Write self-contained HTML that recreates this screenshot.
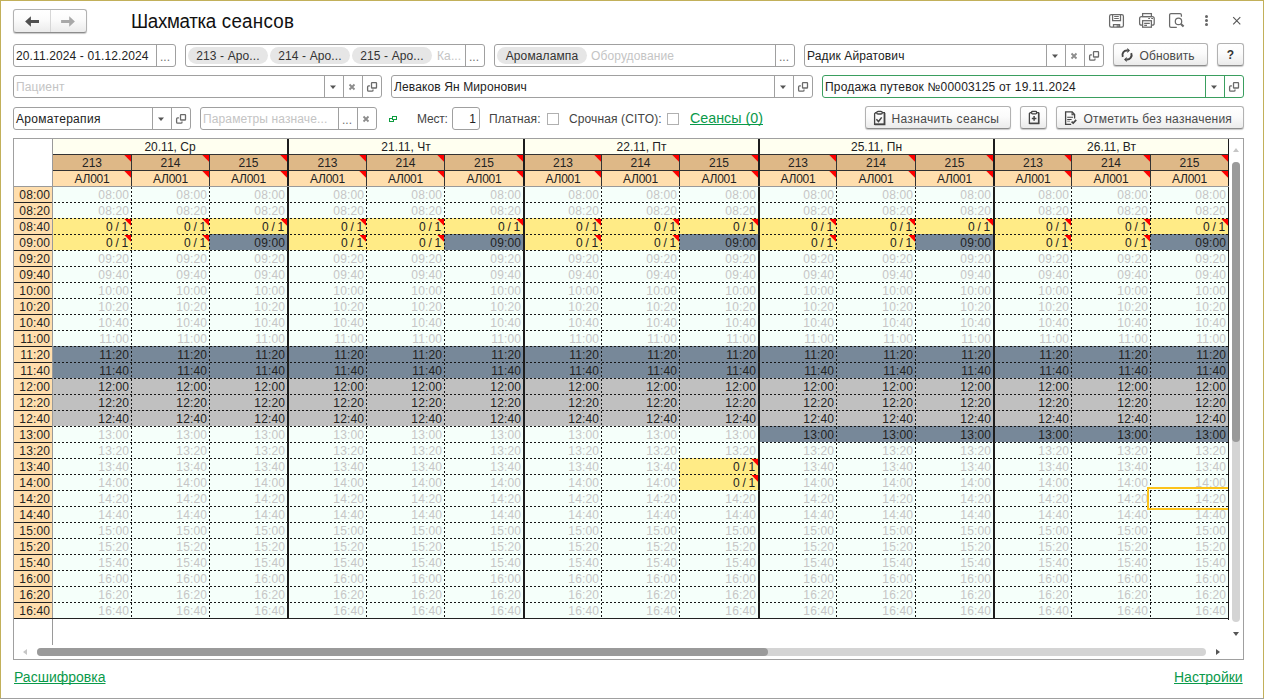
<!DOCTYPE html><html><head><meta charset="utf-8"><title>Шахматка сеансов</title><style>
*{box-sizing:border-box;margin:0;padding:0}
html,body{width:1264px;height:699px;overflow:hidden;background:#fff}
body{position:relative;font-family:"Liberation Sans",sans-serif;font-size:12px;color:#222;letter-spacing:0.12px}
.abs{position:absolute}
.wb{position:absolute;background:#c2b05a}
.field{position:absolute;height:23px;border:1px solid #a0a0a0;border-radius:3px;background:#fff;overflow:hidden}
.field .tx{position:absolute;left:2px;top:1px;line-height:21px;white-space:nowrap;color:#222}
.field .ph{position:absolute;top:1px;line-height:21px;white-space:nowrap;color:#c4c4c4}
.seg{position:absolute;top:0;bottom:0;width:19px;border-left:1px solid #a0a0a0}
.tag{position:absolute;top:2px;height:17px;border-radius:9px;background:#e6e6e6;line-height:19px;text-align:center;white-space:nowrap;color:#333}
.btn{position:absolute;height:23px;border:1px solid #b2b2b2;border-bottom-color:#8c8c8c;border-radius:3px;background:linear-gradient(#ffffff,#fbfbfb 45%,#ebebeb);box-shadow:0 1px 1px rgba(0,0,0,.22);white-space:nowrap;color:#4a4a4a;letter-spacing:0}
.lbl{position:absolute;white-space:nowrap;line-height:23px;color:#444}
.cb{position:absolute;width:12px;height:12px;border:1px solid #b0b0b0;background:#fff}
.lnk{position:absolute;color:#0a9a4a;text-decoration:underline;text-decoration-skip-ink:none;white-space:nowrap;letter-spacing:0}
.c{position:absolute;height:15px;line-height:17px;text-align:right;padding-right:2px;color:#c6c6c6;white-space:nowrap;overflow:hidden}
.h{position:absolute;height:15px;line-height:17px;text-align:center;color:#222;white-space:nowrap;overflow:hidden;letter-spacing:0}
.tri{position:absolute;width:7px;height:7px;background:#f00;margin-left:-1px;clip-path:polygon(0.3px 0,7px 0,7px 6.7px)}
.hd{position:absolute;height:1px;background-image:linear-gradient(to right,#161616 50%,transparent 50%);background-size:4px 1px}
.vd{position:absolute;width:1px;background-image:linear-gradient(to bottom,#161616 50%,transparent 50%);background-size:1px 4px}
</style></head><body>
<div class="wb" style="left:0;top:0;width:1264px;height:1px"></div>
<div class="wb" style="left:0;top:0;width:1px;height:699px"></div>
<div class="wb" style="left:1263px;top:0;width:1px;height:699px"></div>
<div class="abs" style="left:0;top:698px;width:1264px;height:1px;background:#a0a0a0"></div>
<div class="btn" style="left:13px;top:9px;width:74px;height:24px"></div>
<div class="abs" style="left:50px;top:10px;width:1px;height:22px;background:#d6d6d6"></div>
<svg class="abs" style="left:24px;top:14px" width="16" height="14" viewBox="0 0 16 14"><path d="M1.1 7.5 L6.9 2.2 V6 H15 V9 H6.9 V12.8 Z" fill="#505050"/></svg>
<svg class="abs" style="left:60px;top:14px" width="16" height="14" viewBox="0 0 16 14"><path d="M14.9 7.5 L9.2 2.2 V6 H1.1 V9 H9.2 V12.8 Z" fill="#a8a8a8"/></svg>
<div class="abs" style="left:131px;top:9px;font-size:19.5px;line-height:24px;color:#111;white-space:nowrap;letter-spacing:0;transform:scaleX(0.963);transform-origin:0 0"><span style="letter-spacing:-0.37px">Шахматка</span> <span style="letter-spacing:0.25px;margin-left:0.8px">сеансов</span></div>
<svg class="abs" style="left:1108px;top:12px" width="140" height="18" viewBox="0 0 140 18" fill="none" stroke="#6a6a6a" stroke-width="1.25"><rect x="1.6" y="2.6" width="13.8" height="12.6" rx="1.6"/><path d="M4.6 2.8 V8.7 H12.5 V2.8"/><path d="M6.2 4.5 H10.8 M6.2 6.5 H10.8" stroke-width="1"/><path d="M5.5 15 V12.7 H11.6 V15"/><rect x="8.6" y="13.2" width="2.6" height="2" fill="#7a7a7a" stroke="none"/><rect x="34.6" y="1.6" width="8.8" height="3"/><rect x="31.6" y="4.6" width="14.6" height="8.6" rx="2"/><rect x="34.6" y="8.7" width="8.8" height="6.5" fill="#fff"/><path d="M36.2 11.4 H41.8 M36.2 13.4 H39" stroke-width="1.1"/><path d="M40.2 6.5 H42 M43.2 6.5 H45" stroke-width="1.1"/><path d="M73.4 4.8 V3 a1.4 1.4 0 0 0 -1.4 -1.4 H63 a1.4 1.4 0 0 0 -1.4 1.4 V14 a1.4 1.4 0 0 0 1.4 1.4 H68.8"/><circle cx="70.5" cy="9.4" r="3.2"/><path d="M72.9 11.9 L75.6 14.6" stroke-width="2.1"/></svg>
<div class="abs" style="left:1205px;top:14.8px;width:3.2px;height:3.2px;border-radius:2px;background:#666"></div>
<div class="abs" style="left:1205px;top:18.9px;width:3.2px;height:3.2px;border-radius:2px;background:#666"></div>
<div class="abs" style="left:1205px;top:22.9px;width:3.2px;height:3.2px;border-radius:2px;background:#666"></div>
<svg class="abs" style="left:1232px;top:16px" width="10" height="10" viewBox="0 0 10 10"><path d="M1.2 1.2 L8.3 8.3 M8.3 1.2 L1.2 8.3" stroke="#555" stroke-width="1.1" fill="none"/></svg>
<div class="field" style="left:13px;top:44px;width:163px;border-color:#a0a0a0"><div class="tx">20.11.2024 - 01.12.2024</div><div class="seg" style="left:142px;border-color:#a0a0a0"></div><div class="abs" style="left:141.5px;top:0;width:19px;line-height:24px;text-align:center;color:#707070;letter-spacing:0;font-size:12px">...</div></div>
<div class="field" style="left:185px;top:44px;width:300px;border-color:#a0a0a0"><div class="tag" style="left:2px;width:80px">213 - Аро...</div><div class="tag" style="left:84px;width:80px">214 - Аро...</div><div class="tag" style="left:166px;width:80px">215 - Аро...</div><div class="ph" style="left:251px">Ка...</div><div class="seg" style="left:279px;border-color:#a0a0a0"></div><div class="abs" style="left:278.5px;top:0;width:19px;line-height:24px;text-align:center;color:#707070;letter-spacing:0;font-size:12px">...</div></div>
<div class="field" style="left:494px;top:44px;width:301px;border-color:#a0a0a0"><div class="tag" style="left:2px;width:90px">Аромалампа</div><div class="ph" style="left:96px">Оборудование</div><div class="seg" style="left:280px;border-color:#a0a0a0"></div><div class="abs" style="left:279.5px;top:0;width:19px;line-height:24px;text-align:center;color:#707070;letter-spacing:0;font-size:12px">...</div></div>
<div class="field" style="left:804px;top:44px;width:300px;border-color:#a0a0a0"><div class="tx">Радик Айратович</div><div class="seg" style="left:241px;border-color:#a0a0a0"></div><svg class="abs" style="left:246px;top:9px" width="8" height="5" viewBox="0 0 8 5"><path d="M1 0.4 H7 L4 4 Z" fill="#555"/></svg><div class="seg" style="left:260px;border-color:#a0a0a0"></div><svg class="abs" style="left:265px;top:7px" width="8" height="8" viewBox="0 0 8 8"><path d="M1.5 1.5 L6.5 6.5 M6.5 1.5 L1.5 6.5" stroke="#8c8c8c" stroke-width="1.8" fill="none"/></svg><div class="seg" style="left:279px;border-color:#a0a0a0"></div><svg class="abs" style="left:283px;top:5px" width="12" height="12" viewBox="0 0 12 12" fill="none" stroke="#6a6a6a" stroke-width="1.3"><rect x="5.5" y="1.7" width="5" height="5.3" rx="0.6"/><path d="M3.9 4.9 H2.6 a1 1 0 0 0 -1 1 V9.2 a1 1 0 0 0 1 1 H6 a1 1 0 0 0 1 -1 V8.5"/></svg></div>
<div class="btn" style="left:1113px;top:43px;width:95px"><svg class="abs" style="left:6px;top:3px" width="14" height="17" viewBox="0 0 14 17" fill="none" stroke="#444" stroke-width="2"><path d="M2.8 9.8 A4.5 4.5 0 0 1 7.5 3.5"/><path d="M11.2 6.2 A4.5 4.5 0 0 1 6.5 12.5"/><path d="M7.3 0.9 V6.1 L10 3.5 Z" fill="#444" stroke="none"/><path d="M6.7 9.9 V15.1 L4 12.5 Z" fill="#444" stroke="none"/></svg><div class="abs" style="left:25.5px;top:1px;line-height:22px;letter-spacing:0.1px">Обновить</div></div>
<div class="btn" style="left:1217px;top:43px;width:27px;text-align:center;line-height:23px;font-weight:bold;color:#333;font-size:12px">?</div>
<div class="field" style="left:13px;top:75px;width:369px;border-color:#a0a0a0"><div class="ph" style="left:2px">Пациент</div><div class="seg" style="left:310px;border-color:#a0a0a0"></div><svg class="abs" style="left:315px;top:9px" width="8" height="5" viewBox="0 0 8 5"><path d="M1 0.4 H7 L4 4 Z" fill="#555"/></svg><div class="seg" style="left:329px;border-color:#a0a0a0"></div><svg class="abs" style="left:334px;top:7px" width="8" height="8" viewBox="0 0 8 8"><path d="M1.5 1.5 L6.5 6.5 M6.5 1.5 L1.5 6.5" stroke="#8c8c8c" stroke-width="1.8" fill="none"/></svg><div class="seg" style="left:348px;border-color:#a0a0a0"></div><svg class="abs" style="left:352px;top:5px" width="12" height="12" viewBox="0 0 12 12" fill="none" stroke="#6a6a6a" stroke-width="1.3"><rect x="5.5" y="1.7" width="5" height="5.3" rx="0.6"/><path d="M3.9 4.9 H2.6 a1 1 0 0 0 -1 1 V9.2 a1 1 0 0 0 1 1 H6 a1 1 0 0 0 1 -1 V8.5"/></svg></div>
<div class="field" style="left:391px;top:75px;width:422px;border-color:#a0a0a0"><div class="tx">Леваков Ян Миронович</div><div class="seg" style="left:382px;border-color:#a0a0a0"></div><svg class="abs" style="left:387px;top:9px" width="8" height="5" viewBox="0 0 8 5"><path d="M1 0.4 H7 L4 4 Z" fill="#555"/></svg><div class="seg" style="left:401px;border-color:#a0a0a0"></div><svg class="abs" style="left:405px;top:5px" width="12" height="12" viewBox="0 0 12 12" fill="none" stroke="#6a6a6a" stroke-width="1.3"><rect x="5.5" y="1.7" width="5" height="5.3" rx="0.6"/><path d="M3.9 4.9 H2.6 a1 1 0 0 0 -1 1 V9.2 a1 1 0 0 0 1 1 H6 a1 1 0 0 0 1 -1 V8.5"/></svg></div>
<div class="field" style="left:822px;top:75px;width:422px;border-color:#3a9e5f"><div class="tx" style="letter-spacing:0.19px">Продажа путевок №00003125 от 19.11.2024</div><div class="seg" style="left:382px;border-color:#3a9e5f"></div><svg class="abs" style="left:387px;top:9px" width="8" height="5" viewBox="0 0 8 5"><path d="M1 0.4 H7 L4 4 Z" fill="#555"/></svg><div class="seg" style="left:401px;border-color:#3a9e5f"></div><svg class="abs" style="left:405px;top:5px" width="12" height="12" viewBox="0 0 12 12" fill="none" stroke="#6a6a6a" stroke-width="1.3"><rect x="5.5" y="1.7" width="5" height="5.3" rx="0.6"/><path d="M3.9 4.9 H2.6 a1 1 0 0 0 -1 1 V9.2 a1 1 0 0 0 1 1 H6 a1 1 0 0 0 1 -1 V8.5"/></svg></div>
<div class="field" style="left:13px;top:107px;width:178px;border-color:#a0a0a0"><div class="tx" style="letter-spacing:0.3px">Ароматерапия</div><div class="seg" style="left:138px;border-color:#a0a0a0"></div><svg class="abs" style="left:143px;top:9px" width="8" height="5" viewBox="0 0 8 5"><path d="M1 0.4 H7 L4 4 Z" fill="#555"/></svg><div class="seg" style="left:157px;border-color:#a0a0a0"></div><svg class="abs" style="left:161px;top:5px" width="12" height="12" viewBox="0 0 12 12" fill="none" stroke="#6a6a6a" stroke-width="1.3"><rect x="5.5" y="1.7" width="5" height="5.3" rx="0.6"/><path d="M3.9 4.9 H2.6 a1 1 0 0 0 -1 1 V9.2 a1 1 0 0 0 1 1 H6 a1 1 0 0 0 1 -1 V8.5"/></svg></div>
<div class="field" style="left:200px;top:107px;width:177px;border-color:#a0a0a0"><div class="ph" style="left:2px">Параметры назначе...</div><div class="seg" style="left:137px;border-color:#a0a0a0"></div><div class="abs" style="left:136.5px;top:0;width:19px;line-height:24px;text-align:center;color:#707070;letter-spacing:0;font-size:12px">...</div><div class="seg" style="left:156px;border-color:#a0a0a0"></div><svg class="abs" style="left:161px;top:7px" width="8" height="8" viewBox="0 0 8 8"><path d="M1.5 1.5 L6.5 6.5 M6.5 1.5 L1.5 6.5" stroke="#8c8c8c" stroke-width="1.8" fill="none"/></svg></div>
<svg class="abs" style="left:389px;top:116px" width="9" height="7" viewBox="0 0 9 7" fill="none" stroke="#0e9c40" stroke-width="1"><rect x="0.5" y="2.5" width="4" height="3"/><rect x="3.5" y="0.5" width="4" height="3" fill="#fff"/></svg>
<div class="lbl" style="left:417px;top:108px;letter-spacing:-0.2px">Мест:</div>
<div class="field" style="left:452px;top:107px;width:28px;border-color:#a0a0a0"><div class="tx" style="left:auto;right:3px">1</div></div>
<div class="lbl" style="left:489px;top:108px">Платная:</div>
<div class="cb" style="left:547px;top:113px"></div>
<div class="lbl" style="left:569px;top:108px">Срочная (CITO):</div>
<div class="cb" style="left:667px;top:113px"></div>
<div class="lnk" style="left:690px;top:107px;font-size:14.3px;line-height:22px">Сеансы (0)</div>
<div class="btn" style="left:865px;top:106px;width:146px"><svg class="abs" style="left:7px;top:3px" width="13" height="16" viewBox="0 0 13 16" fill="none" stroke="#444" stroke-width="1.3"><path d="M2.6 2.7 H11.4 V14.3 H1.6 V3.7 Z"/><path d="M11.6 3 V14.4 H1.6" stroke-width="1.6"/><rect x="3.7" y="1.3" width="5.6" height="2.7" rx="1.35" fill="#eee"/><path d="M3.4 9.3 L5.5 11.5 L8.7 7.4" stroke-width="1.5"/></svg><div class="abs" style="left:25.5px;top:1px;line-height:22px;letter-spacing:0.33px">Назначить сеансы</div></div>
<div class="btn" style="left:1020px;top:106px;width:27px"><svg class="abs" style="left:7px;top:3px" width="13" height="16" viewBox="0 0 13 16" fill="none" stroke="#444" stroke-width="1.3"><path d="M2.3 2.7 H10.6 V13.3 H1.4 V3.6 Z"/><path d="M10.7 3 V13.4 H1.4" stroke-width="1.5"/><rect x="3.6" y="1.4" width="5" height="2.4" rx="0.8" fill="#f4f4f4"/><path d="M6.1 6.1 V10.7 M3.8 8.4 H8.4" stroke-width="1.5"/></svg></div>
<div class="btn" style="left:1056px;top:106px;width:188px"><svg class="abs" style="left:7px;top:3px" width="14" height="16" viewBox="0 0 14 16" fill="none" stroke="#444" stroke-width="1.3"><path d="M10.6 8.6 V4.6 L8.2 1.8 H1.6 V14.3 H7.2"/><path d="M8.1 2 V4.7 H10.6" stroke-width="1.1"/><path d="M3.2 7.3 H9 M3.2 9.5 H7.6" stroke-width="1.1"/><path d="M3.2 11.2 H6" stroke-width="1" stroke="#888"/><path d="M7.6 11.6 L9.2 13.1 L12.2 9.9" stroke-width="1.7"/></svg><div class="abs" style="left:26.5px;top:1px;line-height:22px;letter-spacing:0.24px">Отметить без назначения</div></div>
<div class="abs" style="left:13px;top:138px;width:1231px;height:522px;border:1px solid #a0a0a0;background:#fff"></div>
<div class="h" style="left:53px;top:139px;width:234px;background:#fffff0">20.11, Ср</div>
<div class="h" style="left:289px;top:139px;width:234px;background:#fffff0">21.11, Чт</div>
<div class="h" style="left:525px;top:139px;width:233px;background:#fffff0">22.11, Пт</div>
<div class="h" style="left:760px;top:139px;width:233px;background:#fffff0">25.11, Пн</div>
<div class="h" style="left:995px;top:139px;width:233px;background:#fffff0">26.11, Вт</div>
<div class="h" style="left:53px;top:155px;width:78px;background:#deb887">213</div>
<div class="h" style="left:53px;top:171px;width:78px;background:#ffdead;letter-spacing:-0.2px">АЛ001</div>
<div class="tri" style="left:125px;top:155px"></div>
<div class="tri" style="left:125px;top:171px"></div>
<div class="h" style="left:132px;top:155px;width:77px;background:#deb887">214</div>
<div class="h" style="left:132px;top:171px;width:77px;background:#ffdead;letter-spacing:-0.2px">АЛ001</div>
<div class="tri" style="left:203px;top:155px"></div>
<div class="tri" style="left:203px;top:171px"></div>
<div class="h" style="left:210px;top:155px;width:77px;background:#deb887">215</div>
<div class="h" style="left:210px;top:171px;width:77px;background:#ffdead;letter-spacing:-0.2px">АЛ001</div>
<div class="tri" style="left:281px;top:155px"></div>
<div class="tri" style="left:281px;top:171px"></div>
<div class="h" style="left:289px;top:155px;width:77px;background:#deb887">213</div>
<div class="h" style="left:289px;top:171px;width:77px;background:#ffdead;letter-spacing:-0.2px">АЛ001</div>
<div class="tri" style="left:360px;top:155px"></div>
<div class="tri" style="left:360px;top:171px"></div>
<div class="h" style="left:367px;top:155px;width:77px;background:#deb887">214</div>
<div class="h" style="left:367px;top:171px;width:77px;background:#ffdead;letter-spacing:-0.2px">АЛ001</div>
<div class="tri" style="left:438px;top:155px"></div>
<div class="tri" style="left:438px;top:171px"></div>
<div class="h" style="left:445px;top:155px;width:78px;background:#deb887">215</div>
<div class="h" style="left:445px;top:171px;width:78px;background:#ffdead;letter-spacing:-0.2px">АЛ001</div>
<div class="tri" style="left:517px;top:155px"></div>
<div class="tri" style="left:517px;top:171px"></div>
<div class="h" style="left:525px;top:155px;width:76px;background:#deb887">213</div>
<div class="h" style="left:525px;top:171px;width:76px;background:#ffdead;letter-spacing:-0.2px">АЛ001</div>
<div class="tri" style="left:595px;top:155px"></div>
<div class="tri" style="left:595px;top:171px"></div>
<div class="h" style="left:602px;top:155px;width:77px;background:#deb887">214</div>
<div class="h" style="left:602px;top:171px;width:77px;background:#ffdead;letter-spacing:-0.2px">АЛ001</div>
<div class="tri" style="left:673px;top:155px"></div>
<div class="tri" style="left:673px;top:171px"></div>
<div class="h" style="left:680px;top:155px;width:78px;background:#deb887">215</div>
<div class="h" style="left:680px;top:171px;width:78px;background:#ffdead;letter-spacing:-0.2px">АЛ001</div>
<div class="tri" style="left:752px;top:155px"></div>
<div class="tri" style="left:752px;top:171px"></div>
<div class="h" style="left:760px;top:155px;width:76px;background:#deb887">213</div>
<div class="h" style="left:760px;top:171px;width:76px;background:#ffdead;letter-spacing:-0.2px">АЛ001</div>
<div class="tri" style="left:830px;top:155px"></div>
<div class="tri" style="left:830px;top:171px"></div>
<div class="h" style="left:837px;top:155px;width:78px;background:#deb887">214</div>
<div class="h" style="left:837px;top:171px;width:78px;background:#ffdead;letter-spacing:-0.2px">АЛ001</div>
<div class="tri" style="left:909px;top:155px"></div>
<div class="tri" style="left:909px;top:171px"></div>
<div class="h" style="left:916px;top:155px;width:77px;background:#deb887">215</div>
<div class="h" style="left:916px;top:171px;width:77px;background:#ffdead;letter-spacing:-0.2px">АЛ001</div>
<div class="tri" style="left:987px;top:155px"></div>
<div class="tri" style="left:987px;top:171px"></div>
<div class="h" style="left:995px;top:155px;width:76px;background:#deb887">213</div>
<div class="h" style="left:995px;top:171px;width:76px;background:#ffdead;letter-spacing:-0.2px">АЛ001</div>
<div class="tri" style="left:1065px;top:155px"></div>
<div class="tri" style="left:1065px;top:171px"></div>
<div class="h" style="left:1072px;top:155px;width:78px;background:#deb887">214</div>
<div class="h" style="left:1072px;top:171px;width:78px;background:#ffdead;letter-spacing:-0.2px">АЛ001</div>
<div class="tri" style="left:1144px;top:155px"></div>
<div class="tri" style="left:1144px;top:171px"></div>
<div class="h" style="left:1151px;top:155px;width:77px;background:#deb887">215</div>
<div class="h" style="left:1151px;top:171px;width:77px;background:#ffdead;letter-spacing:-0.2px">АЛ001</div>
<div class="tri" style="left:1222px;top:155px"></div>
<div class="tri" style="left:1222px;top:171px"></div>
<div class="abs" style="left:53px;top:154px;width:1176px;height:1px;background:#333"></div>
<div class="abs" style="left:53px;top:170px;width:1176px;height:1px;background:#333"></div>
<div class="abs" style="left:131px;top:155px;width:1px;height:31px;background:#333"></div>
<div class="abs" style="left:209px;top:155px;width:1px;height:31px;background:#333"></div>
<div class="abs" style="left:366px;top:155px;width:1px;height:31px;background:#333"></div>
<div class="abs" style="left:444px;top:155px;width:1px;height:31px;background:#333"></div>
<div class="abs" style="left:601px;top:155px;width:1px;height:31px;background:#333"></div>
<div class="abs" style="left:679px;top:155px;width:1px;height:31px;background:#333"></div>
<div class="abs" style="left:836px;top:155px;width:1px;height:31px;background:#333"></div>
<div class="abs" style="left:915px;top:155px;width:1px;height:31px;background:#333"></div>
<div class="abs" style="left:1071px;top:155px;width:1px;height:31px;background:#333"></div>
<div class="abs" style="left:1150px;top:155px;width:1px;height:31px;background:#333"></div>
<div class="abs" style="left:53px;top:187px;width:1176px;height:431px;background:#f5fffa"></div>
<div class="c" style="left:14px;top:187px;width:38px;background:#ffdead;color:#222;padding-right:2px">08:00</div>
<div class="c" style="left:53px;top:187px;width:78px">08:00</div>
<div class="c" style="left:131px;top:187px;width:78px">08:00</div>
<div class="c" style="left:209px;top:187px;width:78px">08:00</div>
<div class="c" style="left:287px;top:187px;width:79px">08:00</div>
<div class="c" style="left:366px;top:187px;width:78px">08:00</div>
<div class="c" style="left:444px;top:187px;width:79px">08:00</div>
<div class="c" style="left:523px;top:187px;width:78px">08:00</div>
<div class="c" style="left:601px;top:187px;width:78px">08:00</div>
<div class="c" style="left:679px;top:187px;width:79px">08:00</div>
<div class="c" style="left:758px;top:187px;width:78px">08:00</div>
<div class="c" style="left:836px;top:187px;width:79px">08:00</div>
<div class="c" style="left:915px;top:187px;width:78px">08:00</div>
<div class="c" style="left:993px;top:187px;width:78px">08:00</div>
<div class="c" style="left:1071px;top:187px;width:79px">08:00</div>
<div class="c" style="left:1150px;top:187px;width:78px">08:00</div>
<div class="c" style="left:14px;top:203px;width:38px;background:#ffdead;color:#222;padding-right:2px">08:20</div>
<div class="c" style="left:53px;top:203px;width:78px">08:20</div>
<div class="c" style="left:131px;top:203px;width:78px">08:20</div>
<div class="c" style="left:209px;top:203px;width:78px">08:20</div>
<div class="c" style="left:287px;top:203px;width:79px">08:20</div>
<div class="c" style="left:366px;top:203px;width:78px">08:20</div>
<div class="c" style="left:444px;top:203px;width:79px">08:20</div>
<div class="c" style="left:523px;top:203px;width:78px">08:20</div>
<div class="c" style="left:601px;top:203px;width:78px">08:20</div>
<div class="c" style="left:679px;top:203px;width:79px">08:20</div>
<div class="c" style="left:758px;top:203px;width:78px">08:20</div>
<div class="c" style="left:836px;top:203px;width:79px">08:20</div>
<div class="c" style="left:915px;top:203px;width:78px">08:20</div>
<div class="c" style="left:993px;top:203px;width:78px">08:20</div>
<div class="c" style="left:1071px;top:203px;width:79px">08:20</div>
<div class="c" style="left:1150px;top:203px;width:78px">08:20</div>
<div class="c" style="left:14px;top:219px;width:38px;background:#ffdead;color:#222;padding-right:2px">08:40</div>
<div class="c" style="left:53px;top:218px;width:78px;height:16px;padding-top:1px;background:#ffeb86;color:#222;letter-spacing:-0.25px;padding-right:3px">0 / 1</div>
<div class="tri" style="left:125px;top:219px"></div>
<div class="c" style="left:131px;top:218px;width:78px;height:16px;padding-top:1px;background:#ffeb86;color:#222;letter-spacing:-0.25px;padding-right:3px">0 / 1</div>
<div class="tri" style="left:203px;top:219px"></div>
<div class="c" style="left:209px;top:218px;width:78px;height:16px;padding-top:1px;background:#ffeb86;color:#222;letter-spacing:-0.25px;padding-right:3px">0 / 1</div>
<div class="tri" style="left:281px;top:219px"></div>
<div class="c" style="left:287px;top:218px;width:79px;height:16px;padding-top:1px;background:#ffeb86;color:#222;letter-spacing:-0.25px;padding-right:3px">0 / 1</div>
<div class="tri" style="left:360px;top:219px"></div>
<div class="c" style="left:366px;top:218px;width:78px;height:16px;padding-top:1px;background:#ffeb86;color:#222;letter-spacing:-0.25px;padding-right:3px">0 / 1</div>
<div class="tri" style="left:438px;top:219px"></div>
<div class="c" style="left:444px;top:218px;width:79px;height:16px;padding-top:1px;background:#ffeb86;color:#222;letter-spacing:-0.25px;padding-right:3px">0 / 1</div>
<div class="tri" style="left:517px;top:219px"></div>
<div class="c" style="left:523px;top:218px;width:78px;height:16px;padding-top:1px;background:#ffeb86;color:#222;letter-spacing:-0.25px;padding-right:3px">0 / 1</div>
<div class="tri" style="left:595px;top:219px"></div>
<div class="c" style="left:601px;top:218px;width:78px;height:16px;padding-top:1px;background:#ffeb86;color:#222;letter-spacing:-0.25px;padding-right:3px">0 / 1</div>
<div class="tri" style="left:673px;top:219px"></div>
<div class="c" style="left:679px;top:218px;width:79px;height:16px;padding-top:1px;background:#ffeb86;color:#222;letter-spacing:-0.25px;padding-right:3px">0 / 1</div>
<div class="tri" style="left:752px;top:219px"></div>
<div class="c" style="left:758px;top:218px;width:78px;height:16px;padding-top:1px;background:#ffeb86;color:#222;letter-spacing:-0.25px;padding-right:3px">0 / 1</div>
<div class="tri" style="left:830px;top:219px"></div>
<div class="c" style="left:836px;top:218px;width:79px;height:16px;padding-top:1px;background:#ffeb86;color:#222;letter-spacing:-0.25px;padding-right:3px">0 / 1</div>
<div class="tri" style="left:909px;top:219px"></div>
<div class="c" style="left:915px;top:218px;width:78px;height:16px;padding-top:1px;background:#ffeb86;color:#222;letter-spacing:-0.25px;padding-right:3px">0 / 1</div>
<div class="tri" style="left:987px;top:219px"></div>
<div class="c" style="left:993px;top:218px;width:78px;height:16px;padding-top:1px;background:#ffeb86;color:#222;letter-spacing:-0.25px;padding-right:3px">0 / 1</div>
<div class="tri" style="left:1065px;top:219px"></div>
<div class="c" style="left:1071px;top:218px;width:79px;height:16px;padding-top:1px;background:#ffeb86;color:#222;letter-spacing:-0.25px;padding-right:3px">0 / 1</div>
<div class="tri" style="left:1144px;top:219px"></div>
<div class="c" style="left:1150px;top:218px;width:78px;height:16px;padding-top:1px;background:#ffeb86;color:#222;letter-spacing:-0.25px;padding-right:3px">0 / 1</div>
<div class="tri" style="left:1222px;top:219px"></div>
<div class="c" style="left:14px;top:235px;width:38px;background:#ffdead;color:#222;padding-right:2px">09:00</div>
<div class="c" style="left:53px;top:234px;width:78px;height:16px;padding-top:1px;background:#ffeb86;color:#222;letter-spacing:-0.25px;padding-right:3px">0 / 1</div>
<div class="tri" style="left:125px;top:235px"></div>
<div class="c" style="left:131px;top:234px;width:78px;height:16px;padding-top:1px;background:#ffeb86;color:#222;letter-spacing:-0.25px;padding-right:3px">0 / 1</div>
<div class="tri" style="left:203px;top:235px"></div>
<div class="c" style="left:209px;top:234px;width:78px;height:16px;padding-top:1px;background:#778899;color:#222">09:00</div>
<div class="c" style="left:287px;top:234px;width:79px;height:16px;padding-top:1px;background:#ffeb86;color:#222;letter-spacing:-0.25px;padding-right:3px">0 / 1</div>
<div class="tri" style="left:360px;top:235px"></div>
<div class="c" style="left:366px;top:234px;width:78px;height:16px;padding-top:1px;background:#ffeb86;color:#222;letter-spacing:-0.25px;padding-right:3px">0 / 1</div>
<div class="tri" style="left:438px;top:235px"></div>
<div class="c" style="left:444px;top:234px;width:79px;height:16px;padding-top:1px;background:#778899;color:#222">09:00</div>
<div class="c" style="left:523px;top:234px;width:78px;height:16px;padding-top:1px;background:#ffeb86;color:#222;letter-spacing:-0.25px;padding-right:3px">0 / 1</div>
<div class="tri" style="left:595px;top:235px"></div>
<div class="c" style="left:601px;top:234px;width:78px;height:16px;padding-top:1px;background:#ffeb86;color:#222;letter-spacing:-0.25px;padding-right:3px">0 / 1</div>
<div class="tri" style="left:673px;top:235px"></div>
<div class="c" style="left:679px;top:234px;width:79px;height:16px;padding-top:1px;background:#778899;color:#222">09:00</div>
<div class="c" style="left:758px;top:234px;width:78px;height:16px;padding-top:1px;background:#ffeb86;color:#222;letter-spacing:-0.25px;padding-right:3px">0 / 1</div>
<div class="tri" style="left:830px;top:235px"></div>
<div class="c" style="left:836px;top:234px;width:79px;height:16px;padding-top:1px;background:#ffeb86;color:#222;letter-spacing:-0.25px;padding-right:3px">0 / 1</div>
<div class="tri" style="left:909px;top:235px"></div>
<div class="c" style="left:915px;top:234px;width:78px;height:16px;padding-top:1px;background:#778899;color:#222">09:00</div>
<div class="c" style="left:993px;top:234px;width:78px;height:16px;padding-top:1px;background:#ffeb86;color:#222;letter-spacing:-0.25px;padding-right:3px">0 / 1</div>
<div class="tri" style="left:1065px;top:235px"></div>
<div class="c" style="left:1071px;top:234px;width:79px;height:16px;padding-top:1px;background:#ffeb86;color:#222;letter-spacing:-0.25px;padding-right:3px">0 / 1</div>
<div class="tri" style="left:1144px;top:235px"></div>
<div class="c" style="left:1150px;top:234px;width:78px;height:16px;padding-top:1px;background:#778899;color:#222">09:00</div>
<div class="c" style="left:14px;top:251px;width:38px;background:#ffdead;color:#222;padding-right:2px">09:20</div>
<div class="c" style="left:53px;top:251px;width:78px">09:20</div>
<div class="c" style="left:131px;top:251px;width:78px">09:20</div>
<div class="c" style="left:209px;top:251px;width:78px">09:20</div>
<div class="c" style="left:287px;top:251px;width:79px">09:20</div>
<div class="c" style="left:366px;top:251px;width:78px">09:20</div>
<div class="c" style="left:444px;top:251px;width:79px">09:20</div>
<div class="c" style="left:523px;top:251px;width:78px">09:20</div>
<div class="c" style="left:601px;top:251px;width:78px">09:20</div>
<div class="c" style="left:679px;top:251px;width:79px">09:20</div>
<div class="c" style="left:758px;top:251px;width:78px">09:20</div>
<div class="c" style="left:836px;top:251px;width:79px">09:20</div>
<div class="c" style="left:915px;top:251px;width:78px">09:20</div>
<div class="c" style="left:993px;top:251px;width:78px">09:20</div>
<div class="c" style="left:1071px;top:251px;width:79px">09:20</div>
<div class="c" style="left:1150px;top:251px;width:78px">09:20</div>
<div class="c" style="left:14px;top:267px;width:38px;background:#ffdead;color:#222;padding-right:2px">09:40</div>
<div class="c" style="left:53px;top:267px;width:78px">09:40</div>
<div class="c" style="left:131px;top:267px;width:78px">09:40</div>
<div class="c" style="left:209px;top:267px;width:78px">09:40</div>
<div class="c" style="left:287px;top:267px;width:79px">09:40</div>
<div class="c" style="left:366px;top:267px;width:78px">09:40</div>
<div class="c" style="left:444px;top:267px;width:79px">09:40</div>
<div class="c" style="left:523px;top:267px;width:78px">09:40</div>
<div class="c" style="left:601px;top:267px;width:78px">09:40</div>
<div class="c" style="left:679px;top:267px;width:79px">09:40</div>
<div class="c" style="left:758px;top:267px;width:78px">09:40</div>
<div class="c" style="left:836px;top:267px;width:79px">09:40</div>
<div class="c" style="left:915px;top:267px;width:78px">09:40</div>
<div class="c" style="left:993px;top:267px;width:78px">09:40</div>
<div class="c" style="left:1071px;top:267px;width:79px">09:40</div>
<div class="c" style="left:1150px;top:267px;width:78px">09:40</div>
<div class="c" style="left:14px;top:283px;width:38px;background:#ffdead;color:#222;padding-right:2px">10:00</div>
<div class="c" style="left:53px;top:283px;width:78px">10:00</div>
<div class="c" style="left:131px;top:283px;width:78px">10:00</div>
<div class="c" style="left:209px;top:283px;width:78px">10:00</div>
<div class="c" style="left:287px;top:283px;width:79px">10:00</div>
<div class="c" style="left:366px;top:283px;width:78px">10:00</div>
<div class="c" style="left:444px;top:283px;width:79px">10:00</div>
<div class="c" style="left:523px;top:283px;width:78px">10:00</div>
<div class="c" style="left:601px;top:283px;width:78px">10:00</div>
<div class="c" style="left:679px;top:283px;width:79px">10:00</div>
<div class="c" style="left:758px;top:283px;width:78px">10:00</div>
<div class="c" style="left:836px;top:283px;width:79px">10:00</div>
<div class="c" style="left:915px;top:283px;width:78px">10:00</div>
<div class="c" style="left:993px;top:283px;width:78px">10:00</div>
<div class="c" style="left:1071px;top:283px;width:79px">10:00</div>
<div class="c" style="left:1150px;top:283px;width:78px">10:00</div>
<div class="c" style="left:14px;top:299px;width:38px;background:#ffdead;color:#222;padding-right:2px">10:20</div>
<div class="c" style="left:53px;top:299px;width:78px">10:20</div>
<div class="c" style="left:131px;top:299px;width:78px">10:20</div>
<div class="c" style="left:209px;top:299px;width:78px">10:20</div>
<div class="c" style="left:287px;top:299px;width:79px">10:20</div>
<div class="c" style="left:366px;top:299px;width:78px">10:20</div>
<div class="c" style="left:444px;top:299px;width:79px">10:20</div>
<div class="c" style="left:523px;top:299px;width:78px">10:20</div>
<div class="c" style="left:601px;top:299px;width:78px">10:20</div>
<div class="c" style="left:679px;top:299px;width:79px">10:20</div>
<div class="c" style="left:758px;top:299px;width:78px">10:20</div>
<div class="c" style="left:836px;top:299px;width:79px">10:20</div>
<div class="c" style="left:915px;top:299px;width:78px">10:20</div>
<div class="c" style="left:993px;top:299px;width:78px">10:20</div>
<div class="c" style="left:1071px;top:299px;width:79px">10:20</div>
<div class="c" style="left:1150px;top:299px;width:78px">10:20</div>
<div class="c" style="left:14px;top:315px;width:38px;background:#ffdead;color:#222;padding-right:2px">10:40</div>
<div class="c" style="left:53px;top:315px;width:78px">10:40</div>
<div class="c" style="left:131px;top:315px;width:78px">10:40</div>
<div class="c" style="left:209px;top:315px;width:78px">10:40</div>
<div class="c" style="left:287px;top:315px;width:79px">10:40</div>
<div class="c" style="left:366px;top:315px;width:78px">10:40</div>
<div class="c" style="left:444px;top:315px;width:79px">10:40</div>
<div class="c" style="left:523px;top:315px;width:78px">10:40</div>
<div class="c" style="left:601px;top:315px;width:78px">10:40</div>
<div class="c" style="left:679px;top:315px;width:79px">10:40</div>
<div class="c" style="left:758px;top:315px;width:78px">10:40</div>
<div class="c" style="left:836px;top:315px;width:79px">10:40</div>
<div class="c" style="left:915px;top:315px;width:78px">10:40</div>
<div class="c" style="left:993px;top:315px;width:78px">10:40</div>
<div class="c" style="left:1071px;top:315px;width:79px">10:40</div>
<div class="c" style="left:1150px;top:315px;width:78px">10:40</div>
<div class="c" style="left:14px;top:331px;width:38px;background:#ffdead;color:#222;padding-right:2px">11:00</div>
<div class="c" style="left:53px;top:331px;width:78px">11:00</div>
<div class="c" style="left:131px;top:331px;width:78px">11:00</div>
<div class="c" style="left:209px;top:331px;width:78px">11:00</div>
<div class="c" style="left:287px;top:331px;width:79px">11:00</div>
<div class="c" style="left:366px;top:331px;width:78px">11:00</div>
<div class="c" style="left:444px;top:331px;width:79px">11:00</div>
<div class="c" style="left:523px;top:331px;width:78px">11:00</div>
<div class="c" style="left:601px;top:331px;width:78px">11:00</div>
<div class="c" style="left:679px;top:331px;width:79px">11:00</div>
<div class="c" style="left:758px;top:331px;width:78px">11:00</div>
<div class="c" style="left:836px;top:331px;width:79px">11:00</div>
<div class="c" style="left:915px;top:331px;width:78px">11:00</div>
<div class="c" style="left:993px;top:331px;width:78px">11:00</div>
<div class="c" style="left:1071px;top:331px;width:79px">11:00</div>
<div class="c" style="left:1150px;top:331px;width:78px">11:00</div>
<div class="c" style="left:14px;top:347px;width:38px;background:#ffdead;color:#222;padding-right:2px">11:20</div>
<div class="c" style="left:53px;top:346px;width:78px;height:16px;padding-top:1px;background:#778899;color:#222">11:20</div>
<div class="c" style="left:131px;top:346px;width:78px;height:16px;padding-top:1px;background:#778899;color:#222">11:20</div>
<div class="c" style="left:209px;top:346px;width:78px;height:16px;padding-top:1px;background:#778899;color:#222">11:20</div>
<div class="c" style="left:287px;top:346px;width:79px;height:16px;padding-top:1px;background:#778899;color:#222">11:20</div>
<div class="c" style="left:366px;top:346px;width:78px;height:16px;padding-top:1px;background:#778899;color:#222">11:20</div>
<div class="c" style="left:444px;top:346px;width:79px;height:16px;padding-top:1px;background:#778899;color:#222">11:20</div>
<div class="c" style="left:523px;top:346px;width:78px;height:16px;padding-top:1px;background:#778899;color:#222">11:20</div>
<div class="c" style="left:601px;top:346px;width:78px;height:16px;padding-top:1px;background:#778899;color:#222">11:20</div>
<div class="c" style="left:679px;top:346px;width:79px;height:16px;padding-top:1px;background:#778899;color:#222">11:20</div>
<div class="c" style="left:758px;top:346px;width:78px;height:16px;padding-top:1px;background:#778899;color:#222">11:20</div>
<div class="c" style="left:836px;top:346px;width:79px;height:16px;padding-top:1px;background:#778899;color:#222">11:20</div>
<div class="c" style="left:915px;top:346px;width:78px;height:16px;padding-top:1px;background:#778899;color:#222">11:20</div>
<div class="c" style="left:993px;top:346px;width:78px;height:16px;padding-top:1px;background:#778899;color:#222">11:20</div>
<div class="c" style="left:1071px;top:346px;width:79px;height:16px;padding-top:1px;background:#778899;color:#222">11:20</div>
<div class="c" style="left:1150px;top:346px;width:78px;height:16px;padding-top:1px;background:#778899;color:#222">11:20</div>
<div class="c" style="left:14px;top:363px;width:38px;background:#ffdead;color:#222;padding-right:2px">11:40</div>
<div class="c" style="left:53px;top:362px;width:78px;height:16px;padding-top:1px;background:#778899;color:#222">11:40</div>
<div class="c" style="left:131px;top:362px;width:78px;height:16px;padding-top:1px;background:#778899;color:#222">11:40</div>
<div class="c" style="left:209px;top:362px;width:78px;height:16px;padding-top:1px;background:#778899;color:#222">11:40</div>
<div class="c" style="left:287px;top:362px;width:79px;height:16px;padding-top:1px;background:#778899;color:#222">11:40</div>
<div class="c" style="left:366px;top:362px;width:78px;height:16px;padding-top:1px;background:#778899;color:#222">11:40</div>
<div class="c" style="left:444px;top:362px;width:79px;height:16px;padding-top:1px;background:#778899;color:#222">11:40</div>
<div class="c" style="left:523px;top:362px;width:78px;height:16px;padding-top:1px;background:#778899;color:#222">11:40</div>
<div class="c" style="left:601px;top:362px;width:78px;height:16px;padding-top:1px;background:#778899;color:#222">11:40</div>
<div class="c" style="left:679px;top:362px;width:79px;height:16px;padding-top:1px;background:#778899;color:#222">11:40</div>
<div class="c" style="left:758px;top:362px;width:78px;height:16px;padding-top:1px;background:#778899;color:#222">11:40</div>
<div class="c" style="left:836px;top:362px;width:79px;height:16px;padding-top:1px;background:#778899;color:#222">11:40</div>
<div class="c" style="left:915px;top:362px;width:78px;height:16px;padding-top:1px;background:#778899;color:#222">11:40</div>
<div class="c" style="left:993px;top:362px;width:78px;height:16px;padding-top:1px;background:#778899;color:#222">11:40</div>
<div class="c" style="left:1071px;top:362px;width:79px;height:16px;padding-top:1px;background:#778899;color:#222">11:40</div>
<div class="c" style="left:1150px;top:362px;width:78px;height:16px;padding-top:1px;background:#778899;color:#222">11:40</div>
<div class="c" style="left:14px;top:379px;width:38px;background:#ffdead;color:#222;padding-right:2px">12:00</div>
<div class="c" style="left:53px;top:378px;width:78px;height:16px;padding-top:1px;background:#c0c0c0;color:#222">12:00</div>
<div class="c" style="left:131px;top:378px;width:78px;height:16px;padding-top:1px;background:#c0c0c0;color:#222">12:00</div>
<div class="c" style="left:209px;top:378px;width:78px;height:16px;padding-top:1px;background:#c0c0c0;color:#222">12:00</div>
<div class="c" style="left:287px;top:378px;width:79px;height:16px;padding-top:1px;background:#c0c0c0;color:#222">12:00</div>
<div class="c" style="left:366px;top:378px;width:78px;height:16px;padding-top:1px;background:#c0c0c0;color:#222">12:00</div>
<div class="c" style="left:444px;top:378px;width:79px;height:16px;padding-top:1px;background:#c0c0c0;color:#222">12:00</div>
<div class="c" style="left:523px;top:378px;width:78px;height:16px;padding-top:1px;background:#c0c0c0;color:#222">12:00</div>
<div class="c" style="left:601px;top:378px;width:78px;height:16px;padding-top:1px;background:#c0c0c0;color:#222">12:00</div>
<div class="c" style="left:679px;top:378px;width:79px;height:16px;padding-top:1px;background:#c0c0c0;color:#222">12:00</div>
<div class="c" style="left:758px;top:378px;width:78px;height:16px;padding-top:1px;background:#c0c0c0;color:#222">12:00</div>
<div class="c" style="left:836px;top:378px;width:79px;height:16px;padding-top:1px;background:#c0c0c0;color:#222">12:00</div>
<div class="c" style="left:915px;top:378px;width:78px;height:16px;padding-top:1px;background:#c0c0c0;color:#222">12:00</div>
<div class="c" style="left:993px;top:378px;width:78px;height:16px;padding-top:1px;background:#c0c0c0;color:#222">12:00</div>
<div class="c" style="left:1071px;top:378px;width:79px;height:16px;padding-top:1px;background:#c0c0c0;color:#222">12:00</div>
<div class="c" style="left:1150px;top:378px;width:78px;height:16px;padding-top:1px;background:#c0c0c0;color:#222">12:00</div>
<div class="c" style="left:14px;top:395px;width:38px;background:#ffdead;color:#222;padding-right:2px">12:20</div>
<div class="c" style="left:53px;top:394px;width:78px;height:16px;padding-top:1px;background:#c0c0c0;color:#222">12:20</div>
<div class="c" style="left:131px;top:394px;width:78px;height:16px;padding-top:1px;background:#c0c0c0;color:#222">12:20</div>
<div class="c" style="left:209px;top:394px;width:78px;height:16px;padding-top:1px;background:#c0c0c0;color:#222">12:20</div>
<div class="c" style="left:287px;top:394px;width:79px;height:16px;padding-top:1px;background:#c0c0c0;color:#222">12:20</div>
<div class="c" style="left:366px;top:394px;width:78px;height:16px;padding-top:1px;background:#c0c0c0;color:#222">12:20</div>
<div class="c" style="left:444px;top:394px;width:79px;height:16px;padding-top:1px;background:#c0c0c0;color:#222">12:20</div>
<div class="c" style="left:523px;top:394px;width:78px;height:16px;padding-top:1px;background:#c0c0c0;color:#222">12:20</div>
<div class="c" style="left:601px;top:394px;width:78px;height:16px;padding-top:1px;background:#c0c0c0;color:#222">12:20</div>
<div class="c" style="left:679px;top:394px;width:79px;height:16px;padding-top:1px;background:#c0c0c0;color:#222">12:20</div>
<div class="c" style="left:758px;top:394px;width:78px;height:16px;padding-top:1px;background:#c0c0c0;color:#222">12:20</div>
<div class="c" style="left:836px;top:394px;width:79px;height:16px;padding-top:1px;background:#c0c0c0;color:#222">12:20</div>
<div class="c" style="left:915px;top:394px;width:78px;height:16px;padding-top:1px;background:#c0c0c0;color:#222">12:20</div>
<div class="c" style="left:993px;top:394px;width:78px;height:16px;padding-top:1px;background:#c0c0c0;color:#222">12:20</div>
<div class="c" style="left:1071px;top:394px;width:79px;height:16px;padding-top:1px;background:#c0c0c0;color:#222">12:20</div>
<div class="c" style="left:1150px;top:394px;width:78px;height:16px;padding-top:1px;background:#c0c0c0;color:#222">12:20</div>
<div class="c" style="left:14px;top:411px;width:38px;background:#ffdead;color:#222;padding-right:2px">12:40</div>
<div class="c" style="left:53px;top:410px;width:78px;height:16px;padding-top:1px;background:#c0c0c0;color:#222">12:40</div>
<div class="c" style="left:131px;top:410px;width:78px;height:16px;padding-top:1px;background:#c0c0c0;color:#222">12:40</div>
<div class="c" style="left:209px;top:410px;width:78px;height:16px;padding-top:1px;background:#c0c0c0;color:#222">12:40</div>
<div class="c" style="left:287px;top:410px;width:79px;height:16px;padding-top:1px;background:#c0c0c0;color:#222">12:40</div>
<div class="c" style="left:366px;top:410px;width:78px;height:16px;padding-top:1px;background:#c0c0c0;color:#222">12:40</div>
<div class="c" style="left:444px;top:410px;width:79px;height:16px;padding-top:1px;background:#c0c0c0;color:#222">12:40</div>
<div class="c" style="left:523px;top:410px;width:78px;height:16px;padding-top:1px;background:#c0c0c0;color:#222">12:40</div>
<div class="c" style="left:601px;top:410px;width:78px;height:16px;padding-top:1px;background:#c0c0c0;color:#222">12:40</div>
<div class="c" style="left:679px;top:410px;width:79px;height:16px;padding-top:1px;background:#c0c0c0;color:#222">12:40</div>
<div class="c" style="left:758px;top:410px;width:78px;height:16px;padding-top:1px;background:#c0c0c0;color:#222">12:40</div>
<div class="c" style="left:836px;top:410px;width:79px;height:16px;padding-top:1px;background:#c0c0c0;color:#222">12:40</div>
<div class="c" style="left:915px;top:410px;width:78px;height:16px;padding-top:1px;background:#c0c0c0;color:#222">12:40</div>
<div class="c" style="left:993px;top:410px;width:78px;height:16px;padding-top:1px;background:#c0c0c0;color:#222">12:40</div>
<div class="c" style="left:1071px;top:410px;width:79px;height:16px;padding-top:1px;background:#c0c0c0;color:#222">12:40</div>
<div class="c" style="left:1150px;top:410px;width:78px;height:16px;padding-top:1px;background:#c0c0c0;color:#222">12:40</div>
<div class="c" style="left:14px;top:427px;width:38px;background:#ffdead;color:#222;padding-right:2px">13:00</div>
<div class="c" style="left:53px;top:427px;width:78px">13:00</div>
<div class="c" style="left:131px;top:427px;width:78px">13:00</div>
<div class="c" style="left:209px;top:427px;width:78px">13:00</div>
<div class="c" style="left:287px;top:427px;width:79px">13:00</div>
<div class="c" style="left:366px;top:427px;width:78px">13:00</div>
<div class="c" style="left:444px;top:427px;width:79px">13:00</div>
<div class="c" style="left:523px;top:427px;width:78px">13:00</div>
<div class="c" style="left:601px;top:427px;width:78px">13:00</div>
<div class="c" style="left:679px;top:427px;width:79px">13:00</div>
<div class="c" style="left:758px;top:426px;width:78px;height:16px;padding-top:1px;background:#778899;color:#222">13:00</div>
<div class="c" style="left:836px;top:426px;width:79px;height:16px;padding-top:1px;background:#778899;color:#222">13:00</div>
<div class="c" style="left:915px;top:426px;width:78px;height:16px;padding-top:1px;background:#778899;color:#222">13:00</div>
<div class="c" style="left:993px;top:426px;width:78px;height:16px;padding-top:1px;background:#778899;color:#222">13:00</div>
<div class="c" style="left:1071px;top:426px;width:79px;height:16px;padding-top:1px;background:#778899;color:#222">13:00</div>
<div class="c" style="left:1150px;top:426px;width:78px;height:16px;padding-top:1px;background:#778899;color:#222">13:00</div>
<div class="c" style="left:14px;top:443px;width:38px;background:#ffdead;color:#222;padding-right:2px">13:20</div>
<div class="c" style="left:53px;top:443px;width:78px">13:20</div>
<div class="c" style="left:131px;top:443px;width:78px">13:20</div>
<div class="c" style="left:209px;top:443px;width:78px">13:20</div>
<div class="c" style="left:287px;top:443px;width:79px">13:20</div>
<div class="c" style="left:366px;top:443px;width:78px">13:20</div>
<div class="c" style="left:444px;top:443px;width:79px">13:20</div>
<div class="c" style="left:523px;top:443px;width:78px">13:20</div>
<div class="c" style="left:601px;top:443px;width:78px">13:20</div>
<div class="c" style="left:679px;top:443px;width:79px">13:20</div>
<div class="c" style="left:758px;top:443px;width:78px">13:20</div>
<div class="c" style="left:836px;top:443px;width:79px">13:20</div>
<div class="c" style="left:915px;top:443px;width:78px">13:20</div>
<div class="c" style="left:993px;top:443px;width:78px">13:20</div>
<div class="c" style="left:1071px;top:443px;width:79px">13:20</div>
<div class="c" style="left:1150px;top:443px;width:78px">13:20</div>
<div class="c" style="left:14px;top:459px;width:38px;background:#ffdead;color:#222;padding-right:2px">13:40</div>
<div class="c" style="left:53px;top:459px;width:78px">13:40</div>
<div class="c" style="left:131px;top:459px;width:78px">13:40</div>
<div class="c" style="left:209px;top:459px;width:78px">13:40</div>
<div class="c" style="left:287px;top:459px;width:79px">13:40</div>
<div class="c" style="left:366px;top:459px;width:78px">13:40</div>
<div class="c" style="left:444px;top:459px;width:79px">13:40</div>
<div class="c" style="left:523px;top:459px;width:78px">13:40</div>
<div class="c" style="left:601px;top:459px;width:78px">13:40</div>
<div class="c" style="left:679px;top:458px;width:79px;height:16px;padding-top:1px;background:#ffeb86;color:#222;letter-spacing:-0.25px;padding-right:3px">0 / 1</div>
<div class="tri" style="left:752px;top:459px"></div>
<div class="c" style="left:758px;top:459px;width:78px">13:40</div>
<div class="c" style="left:836px;top:459px;width:79px">13:40</div>
<div class="c" style="left:915px;top:459px;width:78px">13:40</div>
<div class="c" style="left:993px;top:459px;width:78px">13:40</div>
<div class="c" style="left:1071px;top:459px;width:79px">13:40</div>
<div class="c" style="left:1150px;top:459px;width:78px">13:40</div>
<div class="c" style="left:14px;top:475px;width:38px;background:#ffdead;color:#222;padding-right:2px">14:00</div>
<div class="c" style="left:53px;top:475px;width:78px">14:00</div>
<div class="c" style="left:131px;top:475px;width:78px">14:00</div>
<div class="c" style="left:209px;top:475px;width:78px">14:00</div>
<div class="c" style="left:287px;top:475px;width:79px">14:00</div>
<div class="c" style="left:366px;top:475px;width:78px">14:00</div>
<div class="c" style="left:444px;top:475px;width:79px">14:00</div>
<div class="c" style="left:523px;top:475px;width:78px">14:00</div>
<div class="c" style="left:601px;top:475px;width:78px">14:00</div>
<div class="c" style="left:679px;top:474px;width:79px;height:16px;padding-top:1px;background:#ffeb86;color:#222;letter-spacing:-0.25px;padding-right:3px">0 / 1</div>
<div class="tri" style="left:752px;top:475px"></div>
<div class="c" style="left:758px;top:475px;width:78px">14:00</div>
<div class="c" style="left:836px;top:475px;width:79px">14:00</div>
<div class="c" style="left:915px;top:475px;width:78px">14:00</div>
<div class="c" style="left:993px;top:475px;width:78px">14:00</div>
<div class="c" style="left:1071px;top:475px;width:79px">14:00</div>
<div class="c" style="left:1150px;top:475px;width:78px">14:00</div>
<div class="c" style="left:14px;top:491px;width:38px;background:#ffdead;color:#222;padding-right:2px">14:20</div>
<div class="c" style="left:53px;top:491px;width:78px">14:20</div>
<div class="c" style="left:131px;top:491px;width:78px">14:20</div>
<div class="c" style="left:209px;top:491px;width:78px">14:20</div>
<div class="c" style="left:287px;top:491px;width:79px">14:20</div>
<div class="c" style="left:366px;top:491px;width:78px">14:20</div>
<div class="c" style="left:444px;top:491px;width:79px">14:20</div>
<div class="c" style="left:523px;top:491px;width:78px">14:20</div>
<div class="c" style="left:601px;top:491px;width:78px">14:20</div>
<div class="c" style="left:679px;top:491px;width:79px">14:20</div>
<div class="c" style="left:758px;top:491px;width:78px">14:20</div>
<div class="c" style="left:836px;top:491px;width:79px">14:20</div>
<div class="c" style="left:915px;top:491px;width:78px">14:20</div>
<div class="c" style="left:993px;top:491px;width:78px">14:20</div>
<div class="c" style="left:1071px;top:491px;width:79px">14:20</div>
<div class="c" style="left:1150px;top:491px;width:78px">14:20</div>
<div class="c" style="left:14px;top:507px;width:38px;background:#ffdead;color:#222;padding-right:2px">14:40</div>
<div class="c" style="left:53px;top:507px;width:78px">14:40</div>
<div class="c" style="left:131px;top:507px;width:78px">14:40</div>
<div class="c" style="left:209px;top:507px;width:78px">14:40</div>
<div class="c" style="left:287px;top:507px;width:79px">14:40</div>
<div class="c" style="left:366px;top:507px;width:78px">14:40</div>
<div class="c" style="left:444px;top:507px;width:79px">14:40</div>
<div class="c" style="left:523px;top:507px;width:78px">14:40</div>
<div class="c" style="left:601px;top:507px;width:78px">14:40</div>
<div class="c" style="left:679px;top:507px;width:79px">14:40</div>
<div class="c" style="left:758px;top:507px;width:78px">14:40</div>
<div class="c" style="left:836px;top:507px;width:79px">14:40</div>
<div class="c" style="left:915px;top:507px;width:78px">14:40</div>
<div class="c" style="left:993px;top:507px;width:78px">14:40</div>
<div class="c" style="left:1071px;top:507px;width:79px">14:40</div>
<div class="c" style="left:1150px;top:507px;width:78px">14:40</div>
<div class="c" style="left:14px;top:523px;width:38px;background:#ffdead;color:#222;padding-right:2px">15:00</div>
<div class="c" style="left:53px;top:523px;width:78px">15:00</div>
<div class="c" style="left:131px;top:523px;width:78px">15:00</div>
<div class="c" style="left:209px;top:523px;width:78px">15:00</div>
<div class="c" style="left:287px;top:523px;width:79px">15:00</div>
<div class="c" style="left:366px;top:523px;width:78px">15:00</div>
<div class="c" style="left:444px;top:523px;width:79px">15:00</div>
<div class="c" style="left:523px;top:523px;width:78px">15:00</div>
<div class="c" style="left:601px;top:523px;width:78px">15:00</div>
<div class="c" style="left:679px;top:523px;width:79px">15:00</div>
<div class="c" style="left:758px;top:523px;width:78px">15:00</div>
<div class="c" style="left:836px;top:523px;width:79px">15:00</div>
<div class="c" style="left:915px;top:523px;width:78px">15:00</div>
<div class="c" style="left:993px;top:523px;width:78px">15:00</div>
<div class="c" style="left:1071px;top:523px;width:79px">15:00</div>
<div class="c" style="left:1150px;top:523px;width:78px">15:00</div>
<div class="c" style="left:14px;top:539px;width:38px;background:#ffdead;color:#222;padding-right:2px">15:20</div>
<div class="c" style="left:53px;top:539px;width:78px">15:20</div>
<div class="c" style="left:131px;top:539px;width:78px">15:20</div>
<div class="c" style="left:209px;top:539px;width:78px">15:20</div>
<div class="c" style="left:287px;top:539px;width:79px">15:20</div>
<div class="c" style="left:366px;top:539px;width:78px">15:20</div>
<div class="c" style="left:444px;top:539px;width:79px">15:20</div>
<div class="c" style="left:523px;top:539px;width:78px">15:20</div>
<div class="c" style="left:601px;top:539px;width:78px">15:20</div>
<div class="c" style="left:679px;top:539px;width:79px">15:20</div>
<div class="c" style="left:758px;top:539px;width:78px">15:20</div>
<div class="c" style="left:836px;top:539px;width:79px">15:20</div>
<div class="c" style="left:915px;top:539px;width:78px">15:20</div>
<div class="c" style="left:993px;top:539px;width:78px">15:20</div>
<div class="c" style="left:1071px;top:539px;width:79px">15:20</div>
<div class="c" style="left:1150px;top:539px;width:78px">15:20</div>
<div class="c" style="left:14px;top:555px;width:38px;background:#ffdead;color:#222;padding-right:2px">15:40</div>
<div class="c" style="left:53px;top:555px;width:78px">15:40</div>
<div class="c" style="left:131px;top:555px;width:78px">15:40</div>
<div class="c" style="left:209px;top:555px;width:78px">15:40</div>
<div class="c" style="left:287px;top:555px;width:79px">15:40</div>
<div class="c" style="left:366px;top:555px;width:78px">15:40</div>
<div class="c" style="left:444px;top:555px;width:79px">15:40</div>
<div class="c" style="left:523px;top:555px;width:78px">15:40</div>
<div class="c" style="left:601px;top:555px;width:78px">15:40</div>
<div class="c" style="left:679px;top:555px;width:79px">15:40</div>
<div class="c" style="left:758px;top:555px;width:78px">15:40</div>
<div class="c" style="left:836px;top:555px;width:79px">15:40</div>
<div class="c" style="left:915px;top:555px;width:78px">15:40</div>
<div class="c" style="left:993px;top:555px;width:78px">15:40</div>
<div class="c" style="left:1071px;top:555px;width:79px">15:40</div>
<div class="c" style="left:1150px;top:555px;width:78px">15:40</div>
<div class="c" style="left:14px;top:571px;width:38px;background:#ffdead;color:#222;padding-right:2px">16:00</div>
<div class="c" style="left:53px;top:571px;width:78px">16:00</div>
<div class="c" style="left:131px;top:571px;width:78px">16:00</div>
<div class="c" style="left:209px;top:571px;width:78px">16:00</div>
<div class="c" style="left:287px;top:571px;width:79px">16:00</div>
<div class="c" style="left:366px;top:571px;width:78px">16:00</div>
<div class="c" style="left:444px;top:571px;width:79px">16:00</div>
<div class="c" style="left:523px;top:571px;width:78px">16:00</div>
<div class="c" style="left:601px;top:571px;width:78px">16:00</div>
<div class="c" style="left:679px;top:571px;width:79px">16:00</div>
<div class="c" style="left:758px;top:571px;width:78px">16:00</div>
<div class="c" style="left:836px;top:571px;width:79px">16:00</div>
<div class="c" style="left:915px;top:571px;width:78px">16:00</div>
<div class="c" style="left:993px;top:571px;width:78px">16:00</div>
<div class="c" style="left:1071px;top:571px;width:79px">16:00</div>
<div class="c" style="left:1150px;top:571px;width:78px">16:00</div>
<div class="c" style="left:14px;top:587px;width:38px;background:#ffdead;color:#222;padding-right:2px">16:20</div>
<div class="c" style="left:53px;top:587px;width:78px">16:20</div>
<div class="c" style="left:131px;top:587px;width:78px">16:20</div>
<div class="c" style="left:209px;top:587px;width:78px">16:20</div>
<div class="c" style="left:287px;top:587px;width:79px">16:20</div>
<div class="c" style="left:366px;top:587px;width:78px">16:20</div>
<div class="c" style="left:444px;top:587px;width:79px">16:20</div>
<div class="c" style="left:523px;top:587px;width:78px">16:20</div>
<div class="c" style="left:601px;top:587px;width:78px">16:20</div>
<div class="c" style="left:679px;top:587px;width:79px">16:20</div>
<div class="c" style="left:758px;top:587px;width:78px">16:20</div>
<div class="c" style="left:836px;top:587px;width:79px">16:20</div>
<div class="c" style="left:915px;top:587px;width:78px">16:20</div>
<div class="c" style="left:993px;top:587px;width:78px">16:20</div>
<div class="c" style="left:1071px;top:587px;width:79px">16:20</div>
<div class="c" style="left:1150px;top:587px;width:78px">16:20</div>
<div class="c" style="left:14px;top:603px;width:38px;background:#ffdead;color:#222;padding-right:2px">16:40</div>
<div class="c" style="left:53px;top:603px;width:78px">16:40</div>
<div class="c" style="left:131px;top:603px;width:78px">16:40</div>
<div class="c" style="left:209px;top:603px;width:78px">16:40</div>
<div class="c" style="left:287px;top:603px;width:79px">16:40</div>
<div class="c" style="left:366px;top:603px;width:78px">16:40</div>
<div class="c" style="left:444px;top:603px;width:79px">16:40</div>
<div class="c" style="left:523px;top:603px;width:78px">16:40</div>
<div class="c" style="left:601px;top:603px;width:78px">16:40</div>
<div class="c" style="left:679px;top:603px;width:79px">16:40</div>
<div class="c" style="left:758px;top:603px;width:78px">16:40</div>
<div class="c" style="left:836px;top:603px;width:79px">16:40</div>
<div class="c" style="left:915px;top:603px;width:78px">16:40</div>
<div class="c" style="left:993px;top:603px;width:78px">16:40</div>
<div class="c" style="left:1071px;top:603px;width:79px">16:40</div>
<div class="c" style="left:1150px;top:603px;width:78px">16:40</div>
<div class="hd" style="left:54px;top:202px;width:1174px"></div>
<div class="hd" style="left:54px;top:218px;width:1174px"></div>
<div class="hd" style="left:54px;top:234px;width:1174px"></div>
<div class="hd" style="left:54px;top:250px;width:1174px"></div>
<div class="hd" style="left:54px;top:266px;width:1174px"></div>
<div class="hd" style="left:54px;top:282px;width:1174px"></div>
<div class="hd" style="left:54px;top:298px;width:1174px"></div>
<div class="hd" style="left:54px;top:314px;width:1174px"></div>
<div class="hd" style="left:54px;top:330px;width:1174px"></div>
<div class="hd" style="left:54px;top:346px;width:1174px"></div>
<div class="hd" style="left:54px;top:362px;width:1174px"></div>
<div class="hd" style="left:54px;top:378px;width:1174px"></div>
<div class="hd" style="left:54px;top:394px;width:1174px"></div>
<div class="hd" style="left:54px;top:410px;width:1174px"></div>
<div class="hd" style="left:54px;top:426px;width:1174px"></div>
<div class="hd" style="left:54px;top:442px;width:1174px"></div>
<div class="hd" style="left:54px;top:458px;width:1174px"></div>
<div class="hd" style="left:54px;top:474px;width:1174px"></div>
<div class="hd" style="left:54px;top:490px;width:1174px"></div>
<div class="hd" style="left:54px;top:506px;width:1174px"></div>
<div class="hd" style="left:54px;top:522px;width:1174px"></div>
<div class="hd" style="left:54px;top:538px;width:1174px"></div>
<div class="hd" style="left:54px;top:554px;width:1174px"></div>
<div class="hd" style="left:54px;top:570px;width:1174px"></div>
<div class="hd" style="left:54px;top:586px;width:1174px"></div>
<div class="hd" style="left:54px;top:602px;width:1174px"></div>
<div class="vd" style="left:131px;top:187px;height:431px"></div>
<div class="vd" style="left:209px;top:187px;height:431px"></div>
<div class="vd" style="left:366px;top:187px;height:431px"></div>
<div class="vd" style="left:444px;top:187px;height:431px"></div>
<div class="vd" style="left:601px;top:187px;height:431px"></div>
<div class="vd" style="left:679px;top:187px;height:431px"></div>
<div class="vd" style="left:836px;top:187px;height:431px"></div>
<div class="vd" style="left:915px;top:187px;height:431px"></div>
<div class="vd" style="left:1071px;top:187px;height:431px"></div>
<div class="vd" style="left:1150px;top:187px;height:431px"></div>
<div class="abs" style="left:758px;top:139px;width:2px;height:480px;background:#1c1c1c"></div>
<div class="abs" style="left:287px;top:139px;width:2px;height:480px;background:#1c1c1c"></div>
<div class="abs" style="left:993px;top:139px;width:2px;height:480px;background:#1c1c1c"></div>
<div class="abs" style="left:523px;top:139px;width:2px;height:480px;background:#1c1c1c"></div>
<div class="abs" style="left:1228px;top:139px;width:1px;height:481px;background:#1c1c1c"></div>
<div class="abs" style="left:14px;top:202px;width:38px;height:1px;background:#222"></div>
<div class="abs" style="left:14px;top:218px;width:38px;height:1px;background:#222"></div>
<div class="abs" style="left:14px;top:234px;width:38px;height:1px;background:#222"></div>
<div class="abs" style="left:14px;top:250px;width:38px;height:1px;background:#222"></div>
<div class="abs" style="left:14px;top:266px;width:38px;height:1px;background:#222"></div>
<div class="abs" style="left:14px;top:282px;width:38px;height:1px;background:#222"></div>
<div class="abs" style="left:14px;top:298px;width:38px;height:1px;background:#222"></div>
<div class="abs" style="left:14px;top:314px;width:38px;height:1px;background:#222"></div>
<div class="abs" style="left:14px;top:330px;width:38px;height:1px;background:#222"></div>
<div class="abs" style="left:14px;top:346px;width:38px;height:1px;background:#222"></div>
<div class="abs" style="left:14px;top:362px;width:38px;height:1px;background:#222"></div>
<div class="abs" style="left:14px;top:378px;width:38px;height:1px;background:#222"></div>
<div class="abs" style="left:14px;top:394px;width:38px;height:1px;background:#222"></div>
<div class="abs" style="left:14px;top:410px;width:38px;height:1px;background:#222"></div>
<div class="abs" style="left:14px;top:426px;width:38px;height:1px;background:#222"></div>
<div class="abs" style="left:14px;top:442px;width:38px;height:1px;background:#222"></div>
<div class="abs" style="left:14px;top:458px;width:38px;height:1px;background:#222"></div>
<div class="abs" style="left:14px;top:474px;width:38px;height:1px;background:#222"></div>
<div class="abs" style="left:14px;top:490px;width:38px;height:1px;background:#222"></div>
<div class="abs" style="left:14px;top:506px;width:38px;height:1px;background:#222"></div>
<div class="abs" style="left:14px;top:522px;width:38px;height:1px;background:#222"></div>
<div class="abs" style="left:14px;top:538px;width:38px;height:1px;background:#222"></div>
<div class="abs" style="left:14px;top:554px;width:38px;height:1px;background:#222"></div>
<div class="abs" style="left:14px;top:570px;width:38px;height:1px;background:#222"></div>
<div class="abs" style="left:14px;top:586px;width:38px;height:1px;background:#222"></div>
<div class="abs" style="left:14px;top:602px;width:38px;height:1px;background:#222"></div>
<div class="abs" style="left:14px;top:186px;width:1215px;height:1px;background:#9a9a9a"></div>
<div class="abs" style="left:52px;top:139px;width:1px;height:506px;background:#9a9a9a"></div>
<div class="abs" style="left:14px;top:618px;width:1215px;height:1px;background:#222"></div>
<div class="abs" style="left:1147px;top:487px;width:81px;height:23px;border:2px solid #fcc31a;border-right:none"></div>
<div class="abs" style="left:1229px;top:139px;width:14px;height:520px;background:#fff"></div>
<svg class="abs" style="left:1233px;top:148px" width="6" height="4" viewBox="0 0 6 4"><path d="M0 4 H6 L3 0 Z" fill="#c6c6c6"/></svg>
<div class="abs" style="left:1232px;top:162px;width:8px;height:460px;border-radius:4px;background:#d4d4d4"></div>
<div class="abs" style="left:1232px;top:162px;width:8px;height:280px;border-radius:4px;background:#9a9a9a"></div>
<svg class="abs" style="left:1233px;top:632px" width="6" height="4" viewBox="0 0 6 4"><path d="M0 0 H6 L3 4 Z" fill="#555"/></svg>
<svg class="abs" style="left:23px;top:649px" width="4" height="6" viewBox="0 0 4 6"><path d="M4 0 V6 L0 3 Z" fill="#c6c6c6"/></svg>
<div class="abs" style="left:37px;top:648px;width:1169px;height:8px;border-radius:4px;background:#d4d4d4"></div>
<div class="abs" style="left:37px;top:648px;width:731px;height:8px;border-radius:4px;background:#9a9a9a"></div>
<svg class="abs" style="left:1216px;top:649px" width="4" height="6" viewBox="0 0 4 6"><path d="M0 0 V6 L4 3 Z" fill="#555"/></svg>
<div class="lnk" style="left:14px;top:666px;font-size:14px;line-height:22px">Расшифровка</div>
<div class="lnk" style="left:1174px;top:666px;font-size:14px;line-height:22px">Настройки</div>
</body></html>
